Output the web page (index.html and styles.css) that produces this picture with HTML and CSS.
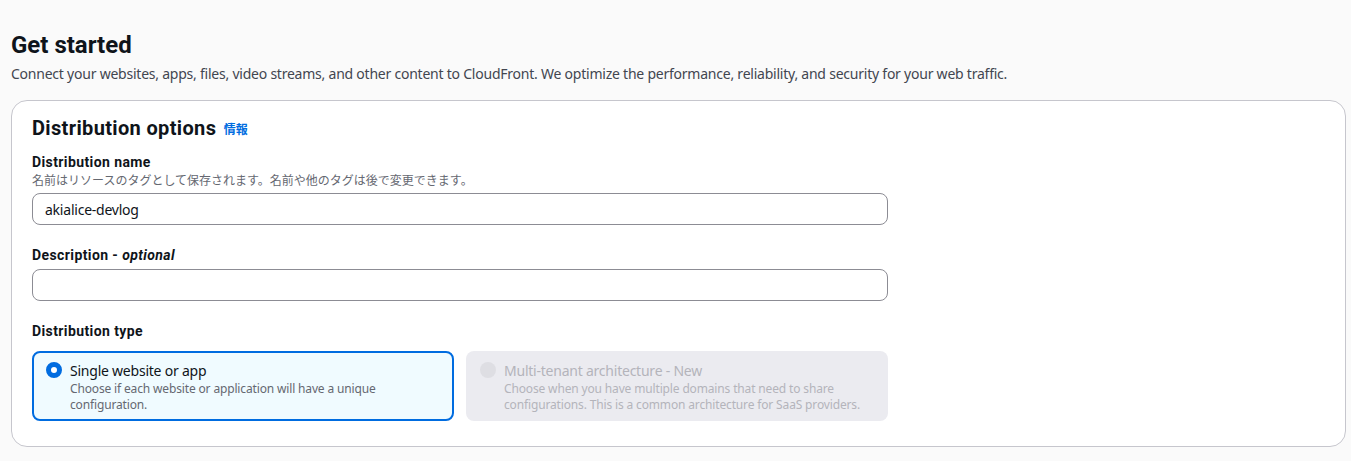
FILE: index.html
```html
<!DOCTYPE html>
<html lang="ja">
<head>
  <meta charset="UTF-8" />
  <title>Create distribution</title>
  <link rel="stylesheet" href="styles.css">
</head>
<body>
  <div class="page">
    <h1 class="page-title">Get started</h1>
    <p class="page-desc">Connect your websites, apps, files, video streams, and other content to CloudFront. We optimize the performance, reliability, and security for your web traffic.</p>

    <div class="panel">
      <h2 class="panel-title">Distribution options <a href="#" class="info-link">情報</a></h2>

      <div class="field">
        <label class="field-label" for="distName">Distribution name</label>
        <div class="field-hint">名前はリソースのタグとして保存されます。名前や他のタグは後で変更できます。</div>
        <input id="distName" class="text-input" type="text" value="akialice-devlog">
      </div>

      <div class="field">
        <label class="field-label" for="distDesc">Description - <i>optional</i></label>
        <input id="distDesc" class="text-input" type="text">
      </div>

      <div class="field">
        <div class="field-label">Distribution type</div>
        <div class="tiles">
          <label class="tile selected">
            <span class="radio"></span>
            <span class="tile-body">
              <span class="tile-title">Single website or app</span>
              <span class="tile-desc">Choose if each website or application will have a unique configuration.</span>
            </span>
          </label>
          <label class="tile disabled">
            <span class="radio"></span>
            <span class="tile-body">
              <span class="tile-title">Multi-tenant architecture - New</span>
              <span class="tile-desc">Choose when you have multiple domains that need to share configurations. This is a common architecture for SaaS providers.</span>
            </span>
          </label>
        </div>
      </div>
    </div>
  </div>
</body>
</html>
```

FILE: styles.css
```css
body {
  margin: 0;
  background: #fafafa;
  font-family: "Noto Sans", "Noto Sans CJK JP", sans-serif;
  letter-spacing: -0.23px;
  color: #0f141a;
}
.page {
  padding: 30px 5px 14px 11px;
}
/* bold text reads narrower in Roboto */
.page-title,
.panel-title,
.field-label {
  font-family: Roboto, "Noto Sans CJK JP", sans-serif;
  font-weight: 700;
  letter-spacing: 0;
}
.page-title {
  margin: 0;
  font-size: 24px;
  line-height: 30px;
}
.page-desc {
  margin: 4px 0 16px;
  font-size: 14px;
  line-height: 20px;
  color: #424650;
}
.panel {
  background: #fff;
  border: 1px solid #c6c6cd;
  border-radius: 16px;
  padding: 15px 20px 25px;
}
.panel-title {
  height: 24px;
  margin: 0 0 12px;
  font-size: 20px;
  line-height: 24px;
  letter-spacing: 0.35px;
}
.info-link {
  font-family: "Noto Sans CJK JP", sans-serif;
  font-size: 12px;
  font-weight: 700;
  letter-spacing: 0;
  color: #006ce0;
  text-decoration: none;
  margin-left: 2px;
  vertical-align: 1px;
}
.field {
  max-width: 856px;
  margin-bottom: 20px;
}
.field:last-child {
  margin-bottom: 0;
}
.field-label {
  display: block;
  height: 20px;
  font-size: 14px;
  line-height: 20px;
  letter-spacing: 0.4px;
  margin-bottom: 4px;
}
.field-hint {
  height: 16px;
  font-family: "Noto Sans CJK JP", sans-serif;
  font-size: 12px;
  line-height: 16px;
  letter-spacing: 0;
  color: #656871;
  margin: -4px 0 5px;
}
.text-input {
  display: block;
  box-sizing: border-box;
  width: 100%;
  height: 32px;
  border: 1px solid #8c8c94;
  border-radius: 8px;
  padding: 0 12px;
  font-family: inherit;
  font-size: 14px;
  letter-spacing: inherit;
  color: #0f141a;
  background: #fff;
}
.tiles {
  display: grid;
  grid-template-columns: 1fr 1fr;
  gap: 12px;
  margin-top: 10px;
}
.tile {
  display: flex;
  gap: 8px;
  box-sizing: border-box;
  min-height: 70px;
  padding: 8px 12px 6px;
  border: 2px solid transparent;
  border-radius: 8px;
}
.tile.selected {
  border-color: #006ce0;
  background: #f0fbff;
}
.tile.disabled {
  background: #ebebf0;
}
.radio {
  flex: none;
  box-sizing: border-box;
  width: 16px;
  height: 16px;
  margin-top: 1px;
  border-radius: 50%;
}
.selected .radio {
  border: 5px solid #006ce0;
  background: #fff;
}
.disabled .radio {
  background: #dedee3;
}
.tile-body {
  display: flex;
  flex-direction: column;
}
.tile-title {
  font-size: 14px;
  line-height: 20px;
}
.tile-desc {
  font-size: 12px;
  line-height: 16px;
  letter-spacing: -0.15px;
  color: #656871;
}
.disabled .tile-title,
.disabled .tile-desc {
  color: #b4b4bb;
}
```
